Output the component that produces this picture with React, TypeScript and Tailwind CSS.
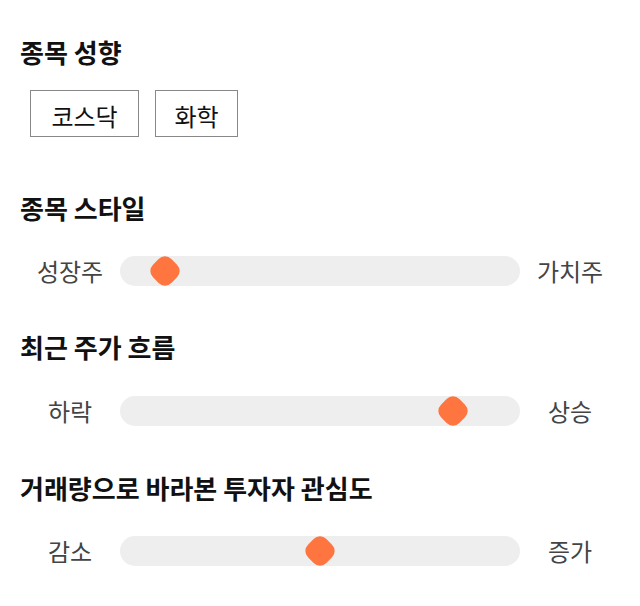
import React from 'react';

interface SliderRowProps {
  left: string;
  right: string;
  value: number;
}

const SliderRow: React.FC<SliderRowProps> = ({ left, right, value }) => {
  // thumb travels within the track, 15px inset on each side
  const thumbCenter = 15 + (value / 100) * 370;

  return (
    <div className="flex items-center h-[30px]">
      <div className="w-[100px] text-center text-[24px] text-[#444]">{left}</div>
      <div className="relative w-[400px] h-[30px] bg-[#eeeeee] rounded-full">
        <div
          className="absolute top-[2px] w-[26px] h-[26px] bg-[#ff7540] rounded-[9px] rotate-45"
          style={{ left: thumbCenter - 13 }}
        />
      </div>
      <div className="w-[100px] text-center text-[24px] text-[#444]">{right}</div>
    </div>
  );
};

const App: React.FC = () => {
  return (
    <div
      className="w-[640px] h-[606px] bg-white pl-5 pt-[34px] text-[#111]"
      style={{ fontFamily: '"Noto Sans CJK KR", "Noto Sans", sans-serif' }}
    >
      <h2 className="text-[26px] leading-[36px] font-bold">종목 성향</h2>
      <div className="flex gap-4 mt-5 ml-[10px]">
        <button className="w-[109px] h-[47px] pt-[5px] border border-[#888] text-[24px] text-[#111] leading-none">코스닥</button>
        <button className="w-[83px] h-[47px] pt-[5px] border border-[#888] text-[24px] text-[#111] leading-none">화학</button>
      </div>

      <h2 className="mt-[53px] text-[26px] leading-[36px] font-bold">종목 스타일</h2>
      <div className="mt-[30px]">
        <SliderRow left="성장주" right="가치주" value={8} />
      </div>

      <h2 className="mt-[43px] text-[26px] leading-[36px] font-bold">최근 주가 흐름</h2>
      <div className="mt-[31px]">
        <SliderRow left="하락" right="상승" value={86} />
      </div>

      <h2 className="mt-[44px] text-[26px] leading-[36px] font-bold">거래량으로 바라본 투자자 관심도</h2>
      <div className="mt-[30px]">
        <SliderRow left="감소" right="증가" value={50} />
      </div>
    </div>
  );
};

export default App;
